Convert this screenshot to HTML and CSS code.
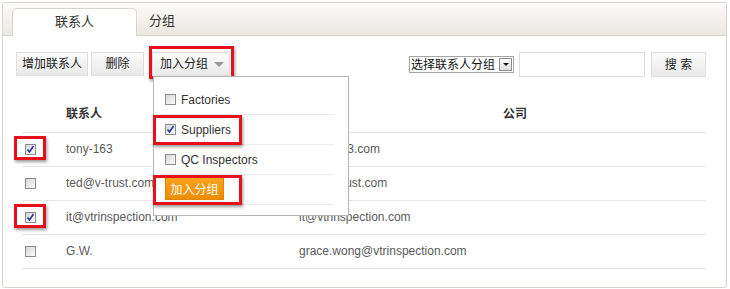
FILE: index.html
```html
<!DOCTYPE html>
<html lang="zh-CN">
<head>
  <meta charset="UTF-8">
  <title>联系人</title>
  <link rel="stylesheet" href="styles.css">
</head>
<body>
  <div class="panel">
    <!-- Tabs -->
    <div class="tabs">
      <div class="tab active">联系人</div>
      <div class="tab">分组</div>
    </div>

    <!-- Toolbar -->
    <div class="toolbar">
      <div class="actions">
        <button class="btn btn-add">增加联系人</button>
        <button class="btn btn-del">删除</button>
        <div class="group-menu">
          <button class="btn btn-group hl">加入分组<span class="caret"></span></button>
          <div class="dropdown">
            <div class="opt"><span class="cb"></span>Factories</div>
            <div class="opt hl hl-opt"><span class="cb checked"><svg width="9" height="9" viewBox="0 0 9 9"><path d="M1.5 4.5 L3.5 7 L7.5 1" fill="none" stroke="#22359c" stroke-width="1.6"/></svg></span>Suppliers</div>
            <div class="opt"><span class="cb"></span>QC Inspectors</div>
            <div class="opt hl hl-opt"><button class="btn-orange">加入分组</button></div>
          </div>
        </div>
      </div>
      <div class="search">
        <div class="select">选择联系人分组<span class="select-arrow"></span></div>
        <input type="text" class="search-input">
        <button class="btn btn-search">搜 索</button>
      </div>
    </div>

    <!-- Contacts table -->
    <table class="contacts">
      <tr>
        <th class="col-check"></th>
        <th class="col-name">联系人</th>
        <th class="col-email">邮箱</th>
        <th class="col-company">公司</th>
      </tr>
      <tr>
        <td><span class="cb checked hl hl-cb"><svg width="9" height="9" viewBox="0 0 9 9"><path d="M1.5 4.5 L3.5 7 L7.5 1" fill="none" stroke="#22359c" stroke-width="1.6"/></svg></span></td>
        <td>tony-163</td>
        <td>tony@163.com</td>
        <td></td>
      </tr>
      <tr>
        <td><span class="cb"></span></td>
        <td>ted@v-trust.com</td>
        <td>ted@v-trust.com</td>
        <td></td>
      </tr>
      <tr>
        <td><span class="cb checked hl hl-cb"><svg width="9" height="9" viewBox="0 0 9 9"><path d="M1.5 4.5 L3.5 7 L7.5 1" fill="none" stroke="#22359c" stroke-width="1.6"/></svg></span></td>
        <td>it@vtrinspection.com</td>
        <td>it@vtrinspection.com</td>
        <td></td>
      </tr>
      <tr>
        <td><span class="cb"></span></td>
        <td>G.W.</td>
        <td>grace.wong@vtrinspection.com</td>
        <td></td>
      </tr>
    </table>
  </div>
</body>
</html>
```

FILE: styles.css
```css
* {
  box-sizing: border-box;
}

body {
  margin: 0;
  background: #fff;
  color: #333;
  font-family: "Liberation Sans", "Noto Sans CJK SC", sans-serif;
  font-size: 12px;
  line-height: 14px;
}

.panel {
  margin: 2px 3px 0 2px;
  height: 286px;
  border: 1px solid #d9d5cc;
  border-radius: 3px;
  background: #fff;
}

/* Tabs */
.tabs {
  display: flex;
  align-items: flex-end;
  height: 33px;
  padding-left: 9px;
  background: linear-gradient(#fcfbfa, #ebe8e2);
  border-bottom: 1px solid #d9d5cc;
  border-radius: 3px 3px 0 0;
}

.tab {
  height: 27px;
  padding: 0 12px;
  line-height: 26px;
  font-size: 13px;
  color: #333;
}

.tab.active {
  width: 125px;
  height: 28px;
  margin-bottom: -1px;
  text-align: center;
  background: #fff;
  border: 1px solid #d9d5cc;
  border-bottom: none;
  border-radius: 5px 5px 0 0;
}

/* Toolbar */
.toolbar {
  display: flex;
  justify-content: space-between;
  align-items: flex-start;
  height: 25px;
  margin: 16px 20px 0 13px;
}

.actions,
.search {
  display: flex;
  align-items: center;
}

.btn {
  height: 24px;
  padding: 0;
  border: 1px solid #dedede;
  background: linear-gradient(#fbfbfb, #e9e9e9);
  color: #222;
  font-family: inherit;
  font-size: 12px;
  line-height: 22px;
  white-space: nowrap;
  cursor: pointer;
}

.btn-add {
  width: 72px;
}

.btn-del {
  width: 53px;
  margin-left: 3px;
}

.group-menu {
  position: relative;
  height: 24px;
  margin-left: 8px;
}

.btn-group {
  display: flex;
  align-items: center;
  width: 78px;
  padding-left: 7px;
}

.caret {
  display: inline-block;
  margin-left: 6px;
  margin-top: 1px;
  border-left: 5px solid transparent;
  border-right: 5px solid transparent;
  border-top: 5px solid #9a9a9a;
}

/* Red highlight frames */
.hl {
  position: relative;
}

.hl::after {
  content: "";
  position: absolute;
  border: 3px solid #e4111b;
  box-shadow: 1px 2px 3px rgba(0, 0, 0, 0.4);
  pointer-events: none;
}

.btn-group::after {
  top: -7px;
  left: -4px;
  right: -5px;
  bottom: -4px;
}

.hl-opt::after {
  top: 0;
  left: -7px;
  right: 92px;
  bottom: -1px;
}

.hl-cb::after {
  top: -9px;
  left: -12px;
  right: -11px;
  bottom: -6px;
}

/* Dropdown */
.dropdown {
  position: absolute;
  top: 24px;
  left: 1px;
  z-index: 5;
  width: 196px;
  height: 140px;
  padding-top: 8px;
  background: #fff;
  border: 1px solid #b4b4b4;
}

.opt {
  display: flex;
  align-items: center;
  height: 30px;
  margin: 0 14px 0 6px;
  padding-left: 5px;
  border-bottom: 1px solid #ececec;
  color: #333;
}

.opt .cb {
  margin-right: 5px;
}

.btn-orange {
  height: 23px;
  width: 59px;
  margin-top: -2px;
  padding: 0;
  border: 1px solid #e08600;
  background: linear-gradient(#f7a21f, #ee8c00);
  color: #fff;
  font-family: inherit;
  font-size: 12px;
}

/* Checkbox */
.cb {
  display: inline-flex;
  align-items: center;
  justify-content: center;
  width: 11px;
  height: 11px;
  border: 1px solid #8c8c8c;
  background: linear-gradient(135deg, #d6d6d6, #fbfbfb);
  vertical-align: middle;
}

/* Search */
.select {
  display: flex;
  align-items: center;
  height: 17px;
  padding-left: 1px;
  border: 1px solid #a5a5a5;
  color: #111;
  font-size: 12px;
}

.select-arrow {
  position: relative;
  width: 13px;
  height: 13px;
  margin: 0 1px 0 4px;
  border: 1px solid #8d8d8d;
  background: linear-gradient(#fdfdfd, #dedede);
}

.select-arrow::after {
  content: "";
  position: absolute;
  top: 4px;
  left: 3px;
  border-left: 3px solid transparent;
  border-right: 3px solid transparent;
  border-top: 3px solid #111;
}

.search-input {
  width: 126px;
  height: 25px;
  margin-left: 5px;
  border: 1px solid #dcdcdc;
}

.btn-search {
  width: 55px;
  height: 25px;
  margin-left: 6px;
}

/* Table */
.contacts {
  width: 684px;
  margin: 20px 0 0 19px;
  border-collapse: collapse;
}

.contacts th,
.contacts td {
  padding: 0 0 0 4px;
  border-bottom: 1px solid #e6e6e6;
  text-align: left;
  vertical-align: middle;
}

.contacts th {
  height: 35px;
  font-weight: bold;
  color: #333;
}

.contacts td {
  height: 34px;
  color: #5a5a5a;
}

.contacts td:first-child {
  padding-left: 3px;
}

.col-check {
  width: 40px;
}

.col-name {
  width: 233px;
}

.col-email {
  width: 204px;
}
```
